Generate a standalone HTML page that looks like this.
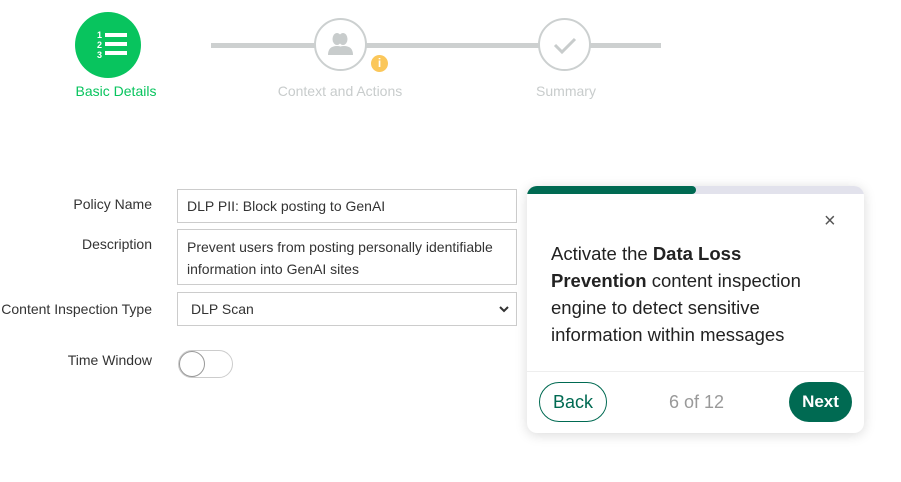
<!DOCTYPE html>
<html><head><style>
*{box-sizing:border-box;margin:0;padding:0}
body{width:901px;height:482px;background:#fff;font-family:"Liberation Sans",sans-serif;position:relative;overflow:hidden}
.a{position:absolute}
.lbl{position:absolute;right:749px;font-size:14px;color:#333;white-space:nowrap}
.inp{position:absolute;left:177px;width:340px;border:1px solid #ccc;font-size:14px;color:#333;padding:0 9px}
.step{font-size:14px;position:absolute;top:83px;text-align:center;width:200px}
.card{position:absolute;left:527px;top:186px;width:337px;height:247px;background:#fff;border-radius:10px;box-shadow:0 2px 12px rgba(0,0,0,.15);overflow:hidden}
</style></head><body>
<div class="a" style="left:211px;top:43px;width:450px;height:5px;background:#cdd0d0"></div>
<div class="a" style="left:75px;top:12px;width:66px;height:66px;border-radius:50%;background:#08c45e"></div>
<svg class="a" style="left:96px;top:30px" width="34" height="30" viewBox="0 0 34 30"><g fill="#fff" font-family="Liberation Sans" font-weight="bold" font-size="9"><text x="1" y="8">1</text><text x="1" y="18">2</text><text x="1" y="28">3</text></g><g fill="#fff"><rect x="9" y="3" width="22" height="4"/><rect x="9" y="12" width="22" height="4"/><rect x="9" y="21" width="22" height="4"/></g></svg>
<div class="a" style="left:314px;top:18px;width:53px;height:53px;border-radius:50%;background:#fff;border:2px solid #ccd0d0"></div>
<svg class="a" style="left:326px;top:31px" width="28" height="26" viewBox="0 0 28 26"><g fill="#c8cccc"><ellipse cx="11" cy="8" rx="4.5" ry="6"/><path d="M2 24c0-6 3-9 9-9s9 3 9 9z"/><ellipse cx="17" cy="8" rx="4.5" ry="6"/><path d="M9 24c0-6 3-9 9-9s9 3 9 9z"/></g></svg>
<div class="a" style="left:371px;top:55px;width:17px;height:17px;border-radius:50%;background:#fbc75a;color:#fff;font-size:12px;font-weight:bold;text-align:center;line-height:17px">i</div>
<div class="a" style="left:538px;top:18px;width:53px;height:53px;border-radius:50%;background:#fff;border:2px solid #ccd0d0"></div>
<svg class="a" style="left:550px;top:30px" width="30" height="30"><path d="M5 15l7 7 13-13" stroke="#c8cccc" stroke-width="3" fill="none"/></svg>
<div class="step" style="left:16px;color:#08c45e">Basic Details</div>
<div class="step" style="left:240px;color:#c8cccc">Context and Actions</div>
<div class="step" style="left:466px;color:#c8cccc">Summary</div>

<div class="lbl" style="top:196px">Policy Name</div>
<div class="lbl" style="top:236px">Description</div>
<div class="lbl" style="top:301px">Content Inspection Type</div>
<div class="lbl" style="top:352px">Time Window</div>
<div class="inp" style="top:189px;height:34px;line-height:32px">DLP PII: Block posting to GenAI</div>
<div class="inp" style="top:229px;height:56px;padding-top:6px;line-height:22px">Prevent users from posting personally identifiable information into GenAI sites</div>
<div class="inp" style="top:292px;height:34px;line-height:32px;padding-left:13px">DLP Scan<svg style="position:absolute;right:7px;top:13px" width="10" height="7"><path d="M1 1l4 4 4-4" stroke="#333" stroke-width="2" fill="none"/></svg></div>
<div class="a" style="left:178px;top:350px;width:55px;height:28px;border-radius:14px;border:1px solid #ccc"></div>
<div class="a" style="left:179px;top:351px;width:26px;height:26px;border-radius:50%;border:1px solid #999;background:#fff"></div>

<div class="card">
<div class="a" style="left:0;top:0;width:337px;height:8px;background:#e2e2ec"></div>
<div class="a" style="left:0;top:0;width:169px;height:8px;background:#006a52;border-radius:0 4px 4px 0"></div>
<div class="a" style="left:297px;top:24px;font-size:20px;color:#555">&#215;</div>
<div class="a" style="left:24px;top:54px;width:290px;font-size:18.5px;line-height:27px;color:#222">Activate the <b>Data Loss Prevention</b> content inspection engine to detect sensitive information within messages</div>
<div class="a" style="left:0;top:185px;width:337px;height:1px;background:#eee"></div>
<div class="a" style="left:12px;top:196px;width:68px;height:40px;border:1px solid #006a52;border-radius:20px;color:#006a52;font-size:18px;text-align:center;line-height:38px">Back</div>
<div class="a" style="left:142px;top:206px;font-size:18px;color:#999">6 of 12</div>
<div class="a" style="left:262px;top:196px;width:63px;height:40px;background:#006a52;border-radius:20px;color:#fff;font-size:17px;font-weight:bold;text-align:center;line-height:40px">Next</div>
</div>
</body></html>
